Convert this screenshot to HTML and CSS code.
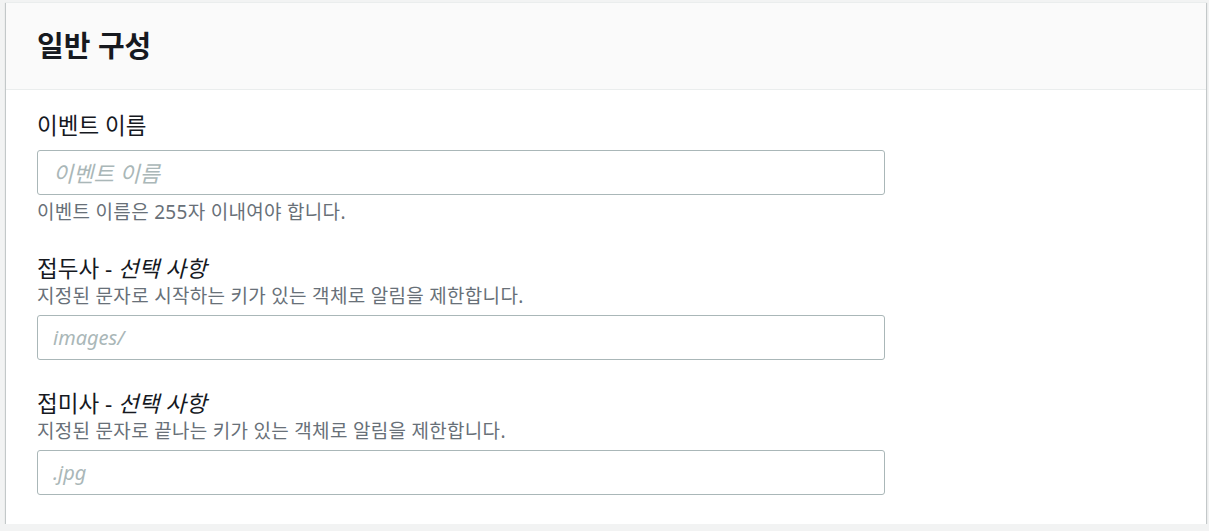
FILE: index.html
```html
<!DOCTYPE html>
<html lang="ko">
<head>
<meta charset="utf-8">
<title>일반 구성</title>
<link rel="stylesheet" href="styles.css">
</head>
<body>
<section class="card">
  <header class="card-header">
    <h2 class="card-title">일반 구성</h2>
  </header>
  <div class="card-body">
    <div class="field field-first">
      <label class="field-label" for="name">이벤트 이름</label>
      <input class="field-input field-input-ko" id="name" type="text" placeholder="이벤트 이름">
      <p class="field-hint">이벤트 이름은 255자 이내여야 합니다.</p>
    </div>
    <div class="field">
      <label class="field-label" for="prefix">접두사 - <i>선택 사항</i></label>
      <p class="field-desc">지정된 문자로 시작하는 키가 있는 객체로 알림을 제한합니다.</p>
      <input class="field-input" id="prefix" type="text" placeholder="images/">
    </div>
    <div class="field">
      <label class="field-label" for="suffix">접미사 - <i>선택 사항</i></label>
      <p class="field-desc">지정된 문자로 끝나는 키가 있는 객체로 알림을 제한합니다.</p>
      <input class="field-input" id="suffix" type="text" placeholder=".jpg">
    </div>
  </div>
</section>
</body>
</html>
```
FILE: styles.css
```css
html, body {
  margin: 0;
  padding: 0;
  background: #f2f3f3;
}
body {
  font-family: "Noto Sans", "Noto Sans CJK KR", sans-serif;
  color: #16191f;
  padding: 2px 3px 0 6px;
}
.card {
  background: #ffffff;
  border-top: 1px solid #eaeded;
  box-shadow: 0 1px 1px 0 rgba(0, 28, 36, 0.3), 1px 1px 1px 0 rgba(0, 28, 36, 0.15), -1px 1px 1px 0 rgba(0, 28, 36, 0.15);
}
.card-header {
  background: #fafafa;
  border-bottom: 1px solid #eaeded;
  height: 86px;
  display: flex;
  align-items: center;
  padding: 0 31px;
}
.card-title {
  margin: 0;
  font-size: 29px;
  font-weight: 700;
  line-height: 34px;
  color: #16191f;
}
.card-body {
  padding: 22px 31px 29px;
  display: flex;
  flex-direction: column;
  gap: 30px;
}
.field {
  display: flex;
  flex-direction: column;
  align-items: flex-start;
}
.field-first {
  margin-bottom: 2px;
}
.field-label {
  font-size: 22.5px;
  line-height: 28px;
  color: #16191f;
}
.field-label i {
  font-style: italic;
}
.field-desc {
  margin: 2px 0 0;
  font-size: 19px;
  letter-spacing: 0.3px;
  line-height: 22px;
  color: #687078;
}
.field-hint {
  margin: 6px 0 0;
  font-size: 19px;
  letter-spacing: 0.3px;
  line-height: 22px;
  color: #687078;
}
.field-input {
  box-sizing: border-box;
  width: 848px;
  height: 45px;
  margin-top: 8px;
  padding: 0 15px;
  border: 1px solid #aab7b8;
  border-radius: 3px;
  background: #ffffff;
  font-family: "Noto Sans", "Noto Sans CJK KR", sans-serif;
  font-size: 20px;
  color: #16191f;
  outline: none;
}
.field-input-ko {
  font-size: 22px;
  padding-left: 15px;
}
.field-label + .field-input {
  margin-top: 10px;
}
.field-input::placeholder {
  color: #aab7b8;
  font-style: italic;
  opacity: 1;
}
```
